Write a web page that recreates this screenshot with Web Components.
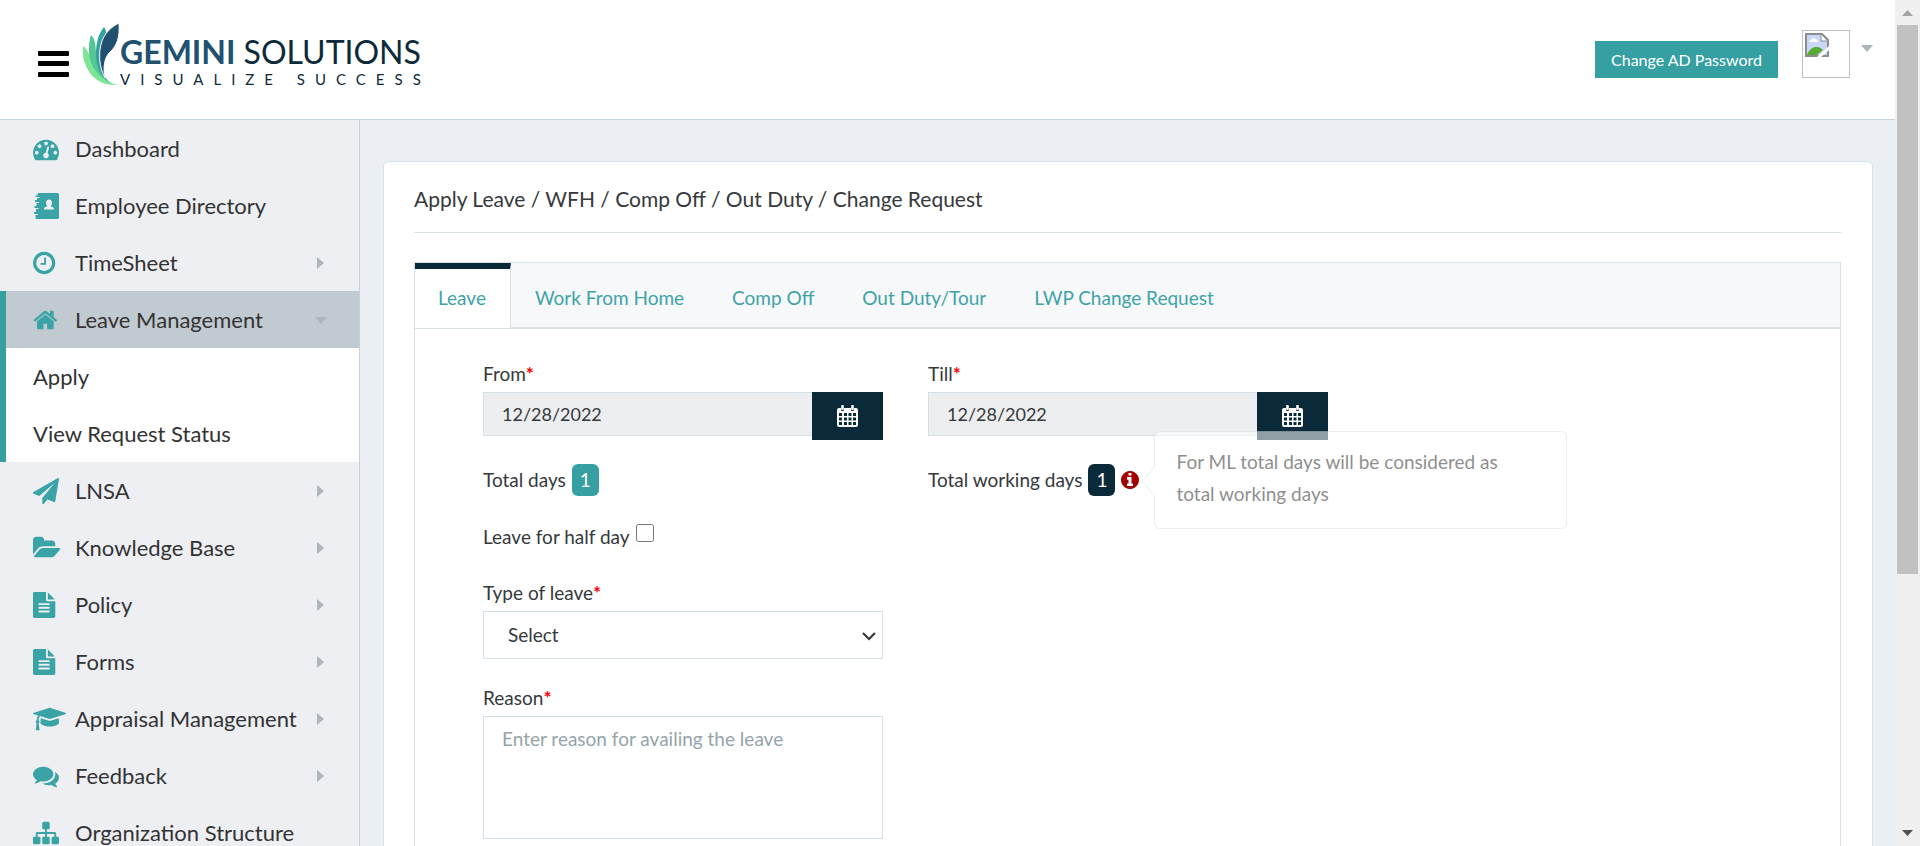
<!DOCTYPE html>
<html lang="en">
<head>
<meta charset="utf-8">
<title>Apply Leave</title>
<style>
html, body { margin: 0; height: 100%; }
body {
  font-family: Lato, "Open Sans", sans-serif;
  font-size: 19px; line-height: 28px; color: #36393c;
  overflow: hidden;
  --teal: #359fa2; --navy: #0a2a39; --line: #d8e2e7; --rule: #c5d2dc;
}
</style>
</head>
<body>
<app-shell>
  <app-header slot="header"></app-header>
  <nav-menu slot="nav">
    <nav-item icon="gauge" href="#dashboard">Dashboard</nav-item>
    <nav-item icon="book" href="#directory">Employee Directory</nav-item>
    <nav-item icon="clock" href="#timesheet" arrow>TimeSheet</nav-item>
    <nav-group>
      <nav-item icon="home" href="#leave" arrow open>Leave Management</nav-item>
      <nav-item href="#apply" sub>Apply</nav-item>
      <nav-item href="#status" sub>View Request Status</nav-item>
    </nav-group>
    <nav-item icon="plane" href="#lnsa" arrow>LNSA</nav-item>
    <nav-item icon="folder" href="#knowledge" arrow>Knowledge Base</nav-item>
    <nav-item icon="file" href="#policy" arrow>Policy</nav-item>
    <nav-item icon="file" href="#forms" arrow>Forms</nav-item>
    <nav-item icon="cap" href="#appraisal" arrow>Appraisal Management</nav-item>
    <nav-item icon="chat" href="#feedback" arrow>Feedback</nav-item>
    <nav-item icon="tree" href="#organization">Organization Structure</nav-item>
  </nav-menu>
  <page-card heading="Apply Leave / WFH / Comp Off / Out Duty / Change Request">
    <tab-bar tabs="Leave|Work From Home|Comp Off|Out Duty/Tour|LWP Change Request"></tab-bar>
    <leave-form></leave-form>
  </page-card>
  <scroll-rail slot="rail"></scroll-rail>
</app-shell>

<script>
const ICONS = {
  gauge: ['0 0 1792 1792', 'M384 1152q0-53-37.5-90.5t-90.5-37.5-90.5 37.5-37.5 90.5 37.5 90.5 90.5 37.5 90.5-37.5 37.5-90.5zm192-448q0-53-37.5-90.5t-90.5-37.5-90.5 37.5-37.5 90.5 37.5 90.5 90.5 37.5 90.5-37.5 37.5-90.5zm428 481l101-382q6-26-7.5-48.5t-38.5-29.5-48 6.5-30 39.5l-101 382q-60 5-107 43.5t-63 98.5q-20 77 20 146t117 89 146-20 89-117q16-60-6-117t-72-91zm660-33q0-53-37.5-90.5t-90.5-37.5-90.5 37.5-37.5 90.5 37.5 90.5 90.5 37.5 90.5-37.5 37.5-90.5zm-640-640q0-53-37.5-90.5t-90.5-37.5-90.5 37.5-37.5 90.5 37.5 90.5 90.5 37.5 90.5-37.5 37.5-90.5zm448 192q0-53-37.5-90.5t-90.5-37.5-90.5 37.5-37.5 90.5 37.5 90.5 90.5 37.5 90.5-37.5 37.5-90.5zm320 448q0 261-141 483-19 29-54 29h-1402q-35 0-54-29-141-221-141-483 0-182 71-348t191-286 286-191 348-71 348 71 286 191 191 286 71 348z'],
  book: ['0 0 26 26', 'M4 0h20.500q1.500 0 1.500 1.500v23q0 1.500-1.500 1.500h-20.500q-1.500 0-1.500-1.500v-2.500h2.500v-1h-3.500q-.5 0-.5-.5v-1q0-.5.500-.5h1.500v-3h2.500v-1h-3.500q-.5 0-.5-.5v-1q0-.5.500-.5h1.500v-3h2.500v-1h-3.500q-.5 0-.5-.5v-1q0-.5.500-.5h1.500v-2h2.500v-1h-3.500q-.5 0-.5-.5v-.5q0-.5.500-.5h1.500v-1.500q0-1.500 1.500-1.500zM16 6.500c-2 0-3 1.500-3 3.500 0 1.500.8 2.500 1.200 3-.2 1-3.200.8-3.200 3v.5h10v-.5c0-2.200-3-2-3.200-3 .4-.5 1.200-1.500 1.200-3 0-2-1-3.500-3-3.500z'],
  clock: ['128 0 1792 1792', 'M1024 544v448q0 14-9 23t-23 9h-320q-14 0-23-9t-9-23v-64q0-14 9-23t23-9h224v-352q0-14 9-23t23-9h64q14 0 23 9t9 23zm416 352q0-148-73-273t-198-198-273-73-273 73-198 198-73 273 73 273 198 198 273 73 273-73 198-198 73-273zm224 0q0 209-103 385.500t-279.500 279.500-385.500 103-385.500-103-279.500-279.500-103-385.500 103-385.500 279.500-279.500 385.500-103 385.500 103 279.500 279.500 103 385.500z'],
  home: ['48 0 1792 1792', 'M1472 992v480q0 26-19 45t-45 19h-384v-384h-256v384h-384q-26 0-45-19t-19-45v-480q0-1 .5-3t.5-3l575-474 575 474q1 2 1 6zm223-69l-62 74q-8 9-21 11h-3q-13 0-21-7l-692-577-692 577q-12 8-24 7-13-2-21-11l-62-74q-8-10-7-23.500t11-21.500l719-599q32-26 76-26t76 26l244 204v-195q0-14 9-23t23-9h192q14 0 23 9t9 23v408l219 182q10 8 11 21.500t-7 23.500z'],
  plane: ['0 0 1792 1792', 'M1764 11q33 24 27 64l-256 1536q-5 29-32 45-14 8-31 8-11 0-24-5l-453-185-242 295q-18 23-49 23-13 0-22-4-19-7-30.500-23.500t-11.500-36.500v-349l864-1059-1069 925-395-162q-37-14-40-55-2-40 32-59l1664-960q15-9 32-9 20 0 36 11z'],
  folder: ['0 0 1920 1792', 'M1879 952q0 31-31 66l-336 396q-43 51-120.500 86.500t-143.500 35.500h-1088q-34 0-60.500-13t-26.500-43q0-31 31-66l336-396q43-51 120.500-86.500t143.500-35.500h1088q34 0 60.500 13t26.500 43zm-343-344v160h-832q-94 0-197 47.500t-164 119.500l-337 396-5 6q0-4-.5-12.500t-.5-12.500v-960q0-92 66-158t158-66h320q92 0 158 66t66 158v32h544q92 0 158 66t66 158z'],
  file: ['128 0 1792 1792', 'M1596 476q14 14 28 36h-472v-472q22 14 36 28zm-476 164h544v1056q0 40-28 68t-68 28h-1344q-40 0-68-28t-28-68v-1600q0-40 28-68t68-28h800v544q0 40 28 68t68 28zm160 736v-64q0-14-9-23t-23-9h-704q-14 0-23 9t-9 23v64q0 14 9 23t23 9h704q14 0 23-9t9-23zm0-256v-64q0-14-9-23t-23-9h-704q-14 0-23 9t-9 23v64q0 14 9 23t23 9h704q14 0 23-9t9-23zm0-256v-64q0-14-9-23t-23-9h-704q-14 0-23 9t-9 23v64q0 14 9 23t23 9h704q14 0 23-9t9-23z'],
  cap: ['0 0 2304 1792', 'M1774 836l18 316q4 69-82 128t-235 93.500-323 34.500-323-34.500-235-93.500-82-128l18-316 574 181q22 7 48 7t48-7zm530-324q0 23-22 31l-1120 352q-4 1-10 1t-10-1l-652-206q-43 34-71 111.500t-34 178.500q63 36 63 109 0 69-58 107l58 433q2 14-8 25-9 11-24 11h-192q-15 0-24-11-10-11-8-25l58-433q-58-38-58-107 0-73 65-111 11-207 98-330l-333-104q-22-8-22-31t22-31l1120-352q4-1 10-1t10 1l1120 352q22 8 22 31z'],
  chat: ['0 0 1792 1792', 'M1408 768q0 139-94 257t-256.500 186.500-353.500 68.500q-86 0-176-16-124 88-278 128-36 9-86 16h-3q-11 0-20.500-8t-11.500-21q-1-3-1-6.500t.5-6.500 2-6l2.500-5 3.500-5.500 4-5 4.500-5 4-4.500q5-6 23-25t26-29.500 22.500-29 25-38.500 20.500-44q-124-72-195-177t-71-224q0-139 94-257t256.500-186.500 353.500-68.500 353.500 68.500 256.500 186.500 94 257zm384 256q0 120-71 224.500t-195 176.500q10 24 20.500 44t25 38.500 22.500 29 26 29.500 23 25q1 1 4 4.500t4.500 5 4 5 3.500 5.500l2.500 5 2 6 .5 6.500-1 6.500q-3 14-13 22t-22 7q-50-7-86-16-154-40-278-128-90 16-176 16-271 0-472-132 58 4 88 4 161 0 309-45t264-129q125-92 192-212t67-254q0-77-23-152 129 71 204 178t75 230z'],
  tree: ['0 0 1792 1792', 'M1792 1248v320q0 40-28 68t-68 28h-320q-40 0-68-28t-28-68v-320q0-40 28-68t68-28h96v-192h-512v192h96q40 0 68 28t28 68v320q0 40-28 68t-68 28h-320q-40 0-68-28t-28-68v-320q0-40 28-68t68-28h96v-192h-512v192h96q40 0 68 28t28 68v320q0 40-28 68t-68 28h-320q-40 0-68-28t-28-68v-320q0-40 28-68t68-28h96v-192q0-52 38-90t90-38h512v-192h-96q-40 0-68-28t-28-68v-320q0-40 28-68t68-28h320q40 0 68 28t28 68v320q0 40-28 68t-68 28h-96v192h512q52 0 90 38t38 90v192h96q40 0 68 28t28 68z'],
  info: ['128 128 1536 1536', 'M1152 1376v-160q0-14-9-23t-23-9h-96v-512q0-14-9-23t-23-9h-320q-14 0-23 9t-9 23v160q0 14 9 23t23 9h96v320h-96q-14 0-23 9t-9 23v160q0 14 9 23t23 9h448q14 0 23-9t9-23zm-128-896v-160q0-14-9-23t-23-9h-192q-14 0-23 9t-9 23v160q0 14 9 23t23 9h192q14 0 23-9t9-23zm640 416q0 209-103 385.500t-279.500 279.500-385.500 103-385.500-103-279.500-279.500-103-385.500 103-385.500 279.500-279.500 385.500-103 385.500 103 279.500 279.500 103 385.500z'],
  calendar: ['0 0 21 22', 'M2 3h2v2q0 1 1 1h1q1 0 1-1v-2h7v2q0 1 1 1h1q1 0 1-1v-2h2q2 0 2 2v15q0 2-2 2h-17q-2 0-2-2v-15q0-2 2-2zM2 8v3h3v-3zm5 0v3h3v-3zm4.500 0v3h3v-3zm4.500 0v3h3v-3zM2 12.500v3h3v-3zm5 0v3h3v-3zm4.500 0v3h3v-3zm4.500 0v3h3v-3zM2 17v3h3v-3zm5 0v3h3v-3zm4.500 0v3h3v-3zm4.500 0v3h3v-3zM5 0h1q.8 0 .8.8v3.400q0 .8-.8.8h-1q-.8 0-.8-.8v-3.400q0-.8.8-.8zM15 0h1q.8 0 .8.8v3.400q0 .8-.8.8h-1q-.8 0-.8-.8v-3.400q0-.8.8-.8z']
};

class Base extends HTMLElement {
  connectedCallback() {
    if (this.shadowRoot) return;
    const t = document.createElement('template');
    t.innerHTML = '<style>:host,*{box-sizing:border-box}' + this.css() + '</style>' + this.html();
    this.attachShadow({ mode: 'open' }).append(t.content.cloneNode(true));
  }
}
const define = (name, css, html) => customElements.define(name, class extends Base {
  css() { return css; }
  html() { return typeof html === 'function' ? html(this) : html; }
});

define('fa-icon', `:host{display:block;height:26px}svg{display:block;height:100%;fill:currentColor}`,
  el => {
    const [box, d] = ICONS[el.getAttribute('name')];
    return `<svg viewBox="${box}" aria-hidden="true"><path fill-rule="evenodd" d="${d}"/></svg>`;
  });

define('app-shell', `
  :host{display:grid;grid-template:120px minmax(0,1fr)/360px minmax(0,1fr) 25px;height:100vh;background:#ebeef3}
  .header{grid-column:1/3}
  .nav{overflow:hidden;background:#eeeff3;border-right:1px solid var(--rule)}
  main{overflow:hidden;padding:41px 22px 0 23px}
  .rail{grid-area:1/3/3/4;display:grid}`, `
  <div class="header"><slot name="header"></slot></div>
  <div class="nav"><slot name="nav"></slot></div>
  <main><slot></slot></main>
  <div class="rail"><slot name="rail"></slot></div>`);

define('brand-logo', `
  :host{display:flex;gap:1px}
  svg{display:block;width:36px;height:64px}
  .words{padding-top:11px}
  .name{display:flex;gap:8px;font-size:32px;line-height:36px;color:#0c2a3a;font-weight:400}
  b{font-weight:700;color:#21516f}
  .tag{font-size:15px;line-height:18px;letter-spacing:10px;color:#0c2a3a;white-space:nowrap}`, `
  <svg viewBox="0 0 36 64" aria-hidden="true">
    <path fill="#7ee596" d="M0 23C6 27 8 38 13 46C19 55 25 60 34 62C19 63 8 55 3 43C0 36-1 29 0 23z"/>
    <path fill="#54c695" d="M8 12C14 17 12 28 14 38C16 49 23 57 30 61C16 55 7 43 6 30C6 23 6 17 8 12z"/>
    <path fill="#36a1a3" d="M21 4C25 9 23 17 19 26C15 36 18 50 25 59C15 50 12 38 13 27C14 17 16 10 21 4z"/>
    <path fill="#21516f" stroke="#fff" stroke-width="1" d="M36 0C37 14 34 23 27 29C21 35 20 45 22 55C16 44 15 30 19 18C22 10 28 4 36 0z"/>
  </svg>
  <div class="words"><div class="name"><b>GEMINI</b><span>SOLUTIONS</span></div><div class="tag">VISUALIZE SUCCESS</div></div>`);

define('app-header', `
  :host{display:flex;align-items:flex-start;height:120px;background:#fff;border-bottom:1px solid var(--rule);padding:0 19px 0 37px}
  button{border:0;font:inherit;cursor:pointer}
  .menu{margin-top:51px;padding:0;width:32px;height:26px;background:none}
  .menu svg{display:block}
  brand-logo{margin:23px 0 0 14px}
  .right{display:flex;align-items:flex-start;margin-left:auto;padding-top:30px}
  .pw{margin:11px 24px 0 0;width:183px;height:37px;padding:0;background:var(--teal);color:#fff;font-size:16px;white-space:nowrap}
  .avatar{width:48px;height:48px;border:1px solid #c0c0c0;padding:2px}
  .caret{margin:10px 0 0 8px;padding:5px 3px;background:none}
  .caret svg,.avatar svg{display:block}`, `
  <button class="menu" aria-label="Toggle menu"><svg width="32" height="26"><rect x="1" y="0" width="31" height="5" rx="1"/><rect x="1" y="10" width="31" height="5" rx="1"/><rect x="1" y="21" width="31" height="5" rx="1"/></svg></button>
  <brand-logo></brand-logo>
  <div class="right">
    <button class="pw">Change AD Password</button>
    <div class="avatar" role="img" aria-label="Profile picture"><svg width="24" height="24" viewBox="0 0 24 24">
      <path fill="#c8d9f8" stroke="#8c8c8c" stroke-width="2" d="M1 1H17L23 7V23H1z"/>
      <path fill="#5aab36" d="M2 22C5 13 14 12 18 17L12 22z"/><path fill="#fff" d="M4 9q0-2 2-2 2-4 4-1 3 0 3 3zM12 24L24 13V17L16 24z"/>
      <path fill="#fff" stroke="#8c8c8c" d="M16 1V8H23z"/></svg></div>
    <button class="caret" aria-label="Account menu"><svg width="12" height="7"><path fill="#a9b6bc" d="M0 0H12L6 7z"/></svg></button>
  </div>`);

define('nav-menu', `:host{display:block}`, `<nav aria-label="Main"><slot></slot></nav>`);
define('nav-group', `:host{display:block;background:#fff;box-shadow:inset 6px 0 var(--teal)}`, `<slot></slot>`);
define('nav-item', `
  :host{display:block}
  a{display:flex;align-items:center;height:57px;padding:0 34px 0 33px;color:#333;text-decoration:none;font-size:22px;line-height:30px;white-space:nowrap}
  fa-icon{flex:0 0 42px;color:#3aa3a5}
  .text{flex:1}
  .arrow{flex:0 0 8px;display:block;fill:#abb7bd;overflow:visible}
  :host([open]) a{background:#c2cad1;box-shadow:inset 6px 0 var(--teal)}`,
  el => {
    const icon = el.getAttribute('icon');
    const arrow = el.hasAttribute('open') ? 'M-2 3H10L4 10z' : 'M0 0V12L7 6z';
    return `<a href="${el.getAttribute('href')}">${icon ? `<fa-icon name="${icon}"></fa-icon>` : ''}<span class="text"><slot></slot></span>${
      el.hasAttribute('arrow') ? `<svg class="arrow" width="8" height="12" aria-hidden="true"><path d="${arrow}"/></svg>` : ''}</a>`;
  });

define('page-card', `
  :host{display:block;background:#fff;border:1px solid var(--line);border-radius:6px 6px 0 0;padding:0 31px 40px 30px}
  h1{margin:0 0 29px;padding:23px 0 19px;border-bottom:1px solid var(--line);font-size:21px;line-height:28px;font-weight:400}`,
  el => `<h1>${el.getAttribute('heading')}</h1><slot></slot>`);

define('tab-bar', `
  :host{display:flex;background:#f6f8fa;border:1px solid var(--line);border-bottom:2px solid var(--line);height:67px}
  a{display:block;padding:19px 24px 0;color:#3fa3a6;text-decoration:none;white-space:nowrap;line-height:32px}
  a[aria-current]{background:#fff;border-top:6px solid var(--navy);padding:13px 24px 0 23px;border-right:1px solid var(--line);margin-bottom:-1px}`,
  el => el.getAttribute('tabs').split('|').map((t, i) => `<a href="#tab${i + 1}"${i ? '' : ' aria-current="page"'}>${t}</a>`).join(''));

define('day-badge', `:host{display:block;min-width:27px;height:32px;line-height:32px;border-radius:6px;background:var(--badge,var(--teal));color:#fff;text-align:center}`, `<slot></slot>`);

define('date-field', `
  :host{display:block}
  label{display:block}i{color:red;font-style:normal;font-weight:700}
  .row{display:flex;align-items:flex-start;height:48px;margin-top:4px}
  input{flex:1;min-width:0;height:44px;border:1px solid #d3e0e8;border-right:0;border-radius:0;background:#edeef0;padding:0 18px;font:inherit;font-size:18px;color:inherit}
  button{flex:0 0 71px;height:48px;border:0;background:var(--navy);color:#fff;padding:0;display:grid;place-items:center}
  fa-icon{height:22px}`,
  el => `<label for="date">${el.getAttribute('label')}<i>*</i></label>
  <div class="row"><input id="date" type="text" value="12/28/2022" readonly><button type="button" aria-label="Pick a date"><fa-icon name="calendar"></fa-icon></button></div>`);

define('info-tip', `
  :host{display:block;position:relative;color:#a30006}
  fa-icon{height:18px}
  .tip{position:absolute;left:33px;top:-40px;width:413px;min-height:98px;padding:14px 60px 14px 21px;background:#fff;border:1px solid var(--line);border-radius:6px;color:#333;line-height:32px;opacity:.55;white-space:normal}
  .tip svg{position:absolute;left:-14px;top:33px}`, `
  <fa-icon name="info"></fa-icon>
  <div class="tip" role="tooltip"><svg width="14" height="32" aria-hidden="true"><path fill="#fff" stroke="#d8e2e7" d="M14 1L1 16L14 31"/></svg><slot></slot></div>`);

define('leave-form', `
  :host{display:block;border:1px solid var(--line);border-top:0;padding:31px 67px 60px 68px}
  form{display:grid;grid-template-columns:repeat(3,minmax(0,1fr));column-gap:45px}
  .line{display:flex;align-items:center;height:32px;margin-top:24px;gap:6px;white-space:nowrap}
  .first{grid-column:1}
  .second{--badge:var(--navy)}
  .wide{grid-column:1/-1;height:34px}
  .field{grid-column:1;margin-top:25px}
  label{display:block}i{color:red;font-style:normal;font-weight:700}
  input[type=checkbox]{margin:0 0 8px;width:18px;height:18px}
  select,textarea{display:block;width:100%;margin-top:4px;border:1px solid #d3e0e8;border-radius:0;background:#fff;font:inherit;color:inherit}
  .pick{display:grid}
  .pick>*{grid-area:1/1}
  select{appearance:none;height:48px;padding:0 24px}
  .pick svg{justify-self:end;align-self:center;margin:5px 7px 0 0;pointer-events:none}
  textarea{height:123px;padding:8px 18px;resize:none}
  textarea::placeholder{color:#95a4aa;opacity:1}`, `
  <form>
    <date-field label="From"></date-field>
    <date-field label="Till"></date-field>
    <div class="line first">Total days <day-badge>1</day-badge></div>
    <div class="line second">Total working days <day-badge>1</day-badge><info-tip>For ML total days will be considered as total working days</info-tip></div>
    <div class="line wide"><label for="half">Leave for half day</label><input id="half" type="checkbox"></div>
    <div class="field"><label for="type">Type of leave<i>*</i></label>
      <div class="pick"><select id="type"><option>Select</option></select>
      <svg width="14" height="10" aria-hidden="true"><path fill="none" stroke="#333" stroke-width="2" d="M1 2L7 8L13 2"/></svg></div></div>
    <div class="field"><label for="reason">Reason<i>*</i></label>
      <textarea id="reason" placeholder="Enter reason for availing the leave"></textarea></div>
  </form>`);

define('scroll-rail', `
  :host{display:flex;flex-direction:column;background:#f0f0f0;padding:0 2px}
  svg{display:block;height:25px;flex:none}
  .track{flex:1}
  .thumb{height:69%;background:#c1c1c1}`, `
  <svg width="21" height="25" aria-hidden="true"><path fill="#a3a3a3" d="M5 16L10.500 10L16 16z"/></svg>
  <div class="track"><div class="thumb"></div></div>
  <svg width="21" height="25" aria-hidden="true"><path fill="#505050" d="M5 9H16L10.500 15z"/></svg>`);
</script>
</body>
</html>
